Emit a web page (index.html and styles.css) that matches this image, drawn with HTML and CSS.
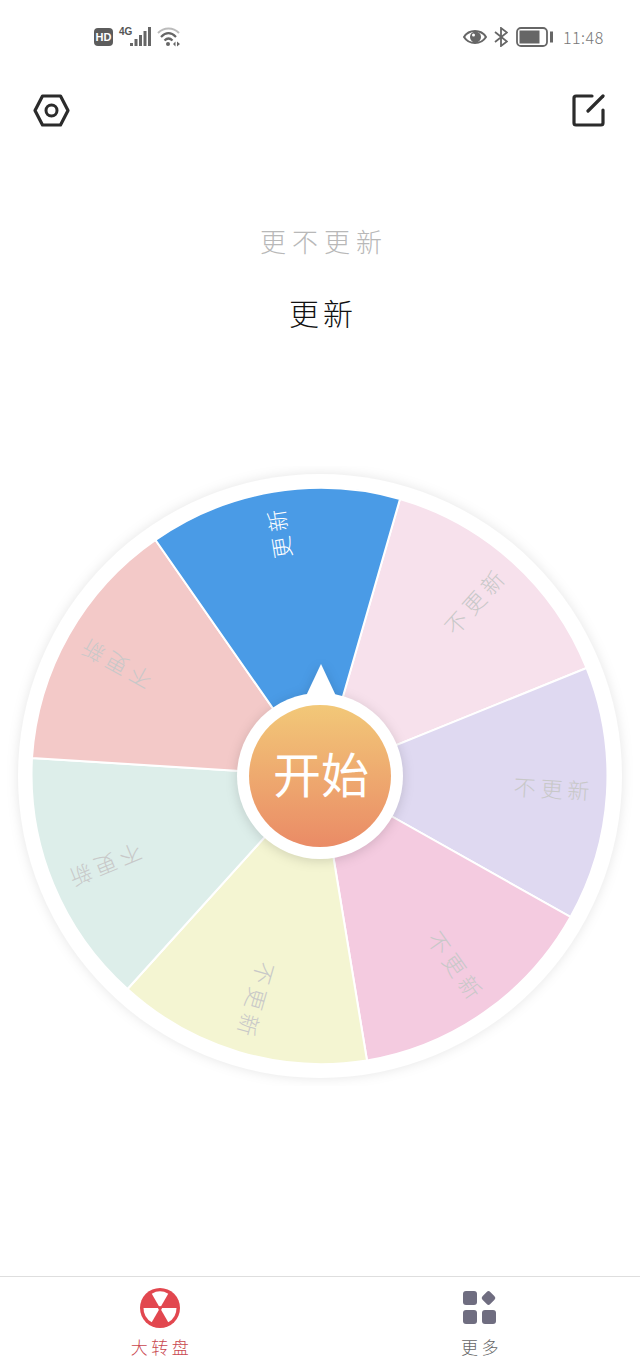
FILE: index.html

```html
<!DOCTYPE html>
<html lang="zh">
<head>
  <meta charset="UTF-8" />
  <meta name="viewport" content="width=device-width, initial-scale=1.0"/>
  <title>大转盘</title>
  <link rel="stylesheet" href="styles.css">
</head>
<body>
  <div class="page">
    <div class="status-bar">
      <div class="status-left">
        <span class="hd-badge">HD</span>
        <div class="signal">
          <span class="signal-type">4G</span>
          <svg class="signal-bars" width="21" height="20" viewBox="0 0 21 20">
            <rect x="0" y="16" width="3" height="3" fill="#666"/>
            <rect x="4.500" y="12" width="3" height="7" fill="#666"/>
            <rect x="9" y="8" width="3" height="11" fill="#666"/>
            <rect x="13.500" y="4" width="3" height="15" fill="#666"/>
            <rect x="18" y="0" width="3" height="19" fill="#666"/>
          </svg>
        </div>
        <svg class="wifi" width="24" height="20" viewBox="0 0 24 20">
          <path d="M1 6 C7 0 16 0 22 6" fill="none" stroke="#bbb" stroke-width="2"/>
          <path d="M4 10 C9 5 14 5 19 10" fill="none" stroke="#666" stroke-width="2.200"/>
          <path d="M7.500 13.500 C10 11 13 11 15.500 13.500" fill="none" stroke="#666" stroke-width="2.200"/>
          <circle cx="11" cy="17" r="2" fill="#666"/>
          <path d="M16 17 L18.500 14.500 V19.500 Z M20 14.500 L23 17 L20 19.500 Z" fill="#666"/>
        </svg>
      </div>
      <div class="status-right">
        <svg class="eye" width="24" height="18" viewBox="0 0 24 18">
          <path d="M1 9 C6 1 18 1 23 9 C18 17 6 17 1 9 Z" fill="none" stroke="#666" stroke-width="2"/>
          <circle cx="12.500" cy="9" r="5.500" fill="#666"/>
          <circle cx="10.500" cy="7" r="1.500" fill="#fff"/>
        </svg>
        <svg class="bluetooth" width="14" height="20" viewBox="0 0 14 20">
          <path d="M1 5 L13 14.500 L7 19 V1 L13 5.500 L1 15" fill="none" stroke="#666" stroke-width="1.800"/>
        </svg>
        <svg class="battery" width="37" height="20" viewBox="0 0 37 20">
          <rect x="1" y="1" width="30" height="18" rx="4" fill="none" stroke="#666" stroke-width="1.800"/>
          <rect x="3.500" y="3.500" width="20" height="13" fill="#666"/>
          <rect x="34" y="4.500" width="3" height="11" fill="#666"/>
        </svg>
        <span class="clock">11:48</span>
      </div>
    </div>

    <div class="toolbar">
      <svg width="37" height="33" viewBox="0 0 37 33">
        <path d="M9.500 2 H27.500 L35 16.500 L27.500 31 H9.500 L2 16.500 Z" fill="none" stroke="#2b2b2b" stroke-width="3.200" stroke-linejoin="round"/>
        <circle cx="18.500" cy="16.500" r="5.500" fill="none" stroke="#2b2b2b" stroke-width="3"/>
      </svg>
      <svg width="33" height="33" viewBox="0 0 33 33">
        <path d="M20 2 H4 Q2 2 2 4 V29 Q2 31 4 31 H29 Q31 31 31 29 V16" fill="none" stroke="#2b2b2b" stroke-width="3.200" stroke-linecap="round"/>
        <path d="M16 17 L31 2" fill="none" stroke="#2b2b2b" stroke-width="3.200" stroke-linecap="round"/>
      </svg>
    </div>

    <div class="titles">
      <div class="title-muted">更不更新</div>
      <div class="title-result">更新</div>
    </div>

    <svg class="wheel" width="640" height="620" viewBox="0 0 640 620">
      <defs>
        <linearGradient id="hubFill" x1="0" y1="0" x2="0" y2="1">
          <stop offset="0" stop-color="#f2c878"/>
          <stop offset="1" stop-color="#ea8b66"/>
        </linearGradient>
      </defs>
      <circle class="wheel-rim" cx="320" cy="310" r="302"/>
      <g class="slices">
        <path fill="#f7e1ec" d="M320 310 L400 33 A288 288 0 0 1 586.500 202 Z"/>
        <path fill="#dfd9f1" d="M320 310 L586.500 202 A288 288 0 0 1 570.500 451 Z"/>
        <path fill="#f4cbe0" d="M320 310 L570.500 451 A288 288 0 0 1 367 594.500 Z"/>
        <path fill="#f4f5d2" d="M320 310 L367 594.500 A288 288 0 0 1 127.500 523 Z"/>
        <path fill="#ddeeea" d="M320 310 L127.500 523 A288 288 0 0 1 32 292 Z"/>
        <path fill="#f3c9c8" d="M320 310 L32 292 A288 288 0 0 1 155.500 74 Z"/>
        <path fill="#4a9be6" d="M320 310 L155.500 74 A288 288 0 0 1 400 33 Z"/>
      </g>
      <g class="labels">
        <text transform="rotate(-48.200 320 310)" x="595" y="318">不更新</text>
        <text transform="rotate(3.300 320 310)" x="595" y="318">不更新</text>
        <text transform="rotate(54.700 320 310)" x="595" y="318">不更新</text>
        <text transform="rotate(106.100 320 310)" x="595" y="318">不更新</text>
        <text transform="rotate(157.600 320 310)" x="595" y="318">不更新</text>
        <text transform="rotate(209 320 310)" x="595" y="318">不更新</text>
        <text class="label-active" transform="rotate(-99.400 320 310)" x="595" y="318">更新</text>
      </g>
      <g class="hub">
        <path fill="#fff" d="M321 198 L337 232 L305 232 Z"/>
        <circle fill="#fff" cx="320" cy="310" r="83"/>
      </g>
      <circle fill="url(#hubFill)" cx="320" cy="310" r="71"/>
      <text class="hub-text" x="321" y="327">开始</text>
    </svg>

    <nav class="tab-bar">
      <div class="tab tab-active">
        <svg width="42" height="42" viewBox="-21 -21 42 42">
          <circle r="20" fill="#e2474f"/>
          <path fill="#fff" d="M0 0 L-8.250 -14.290 A16.500 16.500 0 0 1 8.250 -14.290 Z"/>
          <path fill="#fff" transform="rotate(120)" d="M0 0 L-8.250 -14.290 A16.500 16.500 0 0 1 8.250 -14.290 Z"/>
          <path fill="#fff" transform="rotate(240)" d="M0 0 L-8.250 -14.290 A16.500 16.500 0 0 1 8.250 -14.290 Z"/>
          <circle r="2" fill="#e2474f"/>
        </svg>
        <span class="tab-label">大转盘</span>
      </div>
      <div class="tab">
        <svg width="36" height="36" viewBox="0 0 36 36">
          <rect x="1" y="1" width="14" height="14" rx="3" fill="#6f6d80"/>
          <rect x="21" y="2.500" width="11" height="11" rx="2.500" fill="#6f6d80" transform="rotate(45 26.500 8)"/>
          <rect x="1" y="20" width="14" height="14" rx="3" fill="#6f6d80"/>
          <rect x="20" y="20" width="14" height="14" rx="3" fill="#6f6d80"/>
        </svg>
        <span class="tab-label">更多</span>
      </div>
    </nav>
  </div>
</body>
</html>
```

FILE: styles.css

```css
html, body {
  margin: 0;
  height: 100%;
  background: #fff;
  font-family: 'Noto Sans CJK SC', 'Noto Sans', sans-serif;
}

.page {
  width: 640px;
  height: 1369px;
  display: flex;
  flex-direction: column;
  overflow: hidden;
}

.status-bar {
  height: 74px;
  box-sizing: border-box;
  padding: 27px 36px 0 94px;
  display: flex;
  justify-content: space-between;
  align-items: flex-start;
}

.status-left, .status-right {
  display: flex;
  align-items: flex-start;
}

.hd-badge {
  width: 19px;
  height: 18px;
  margin-top: 1px;
  border-radius: 4px;
  background: #5c5c5c;
  color: #fff;
  font-family: 'Liberation Sans', sans-serif;
  font-size: 11px;
  font-weight: bold;
  line-height: 18px;
  text-align: center;
}

.signal {
  display: flex;
  margin-left: 6px;
}

.signal-type {
  width: 12px;
  margin-right: -1px;
  color: #555;
  font-family: 'Liberation Sans', sans-serif;
  font-size: 10px;
  font-weight: bold;
  line-height: 9px;
}

.wifi {
  margin-left: 6px;
}

.eye {
  margin-top: 1px;
}

.bluetooth {
  margin-left: 7px;
}

.battery {
  margin-left: 8px;
}

.clock {
  width: 41px;
  margin-left: 10px;
  color: #777;
  font-size: 16px;
  font-weight: 300;
  letter-spacing: 0.5px;
  line-height: 20px;
  white-space: nowrap;
}

.toolbar {
  display: flex;
  justify-content: space-between;
  padding: 20px 35px 0 33px;
}

.toolbar svg {
  display: block;
}

.titles {
  height: 339px;
  text-align: center;
}

.title-muted {
  margin-top: 95px;
  padding-left: 8px;
  color: #b8b8b8;
  font-size: 26px;
  font-weight: 300;
  letter-spacing: 6px;
  line-height: 38px;
}

.title-result {
  margin-top: 33px;
  padding-left: 6px;
  color: #111;
  font-size: 30px;
  font-weight: 300;
  letter-spacing: 4px;
  line-height: 38px;
}

.wheel {
  display: block;
  flex: none;
}

.wheel-rim {
  fill: #fff;
  filter: drop-shadow(0 0 6px rgba(0, 0, 0, 0.1));
}

.slices path {
  stroke: #fff;
  stroke-width: 2;
}

.labels text {
  fill: #c8c8c8;
  font-size: 22px;
  font-weight: 300;
  letter-spacing: 5px;
  text-anchor: end;
}

.labels .label-active {
  fill: #fff;
}

.hub {
  filter: drop-shadow(0 2px 6px rgba(0, 0, 0, 0.14));
}

.hub-text {
  fill: #fff;
  font-size: 48px;
  font-weight: 400;
  text-anchor: middle;
}

.tab-bar {
  margin-top: auto;
  height: 93px;
  box-sizing: border-box;
  border-top: 1px solid #dedede;
  display: flex;
}

.tab {
  flex: 1;
  display: flex;
  flex-direction: column;
  align-items: center;
  padding-top: 10px;
  color: #666;
}

.tab svg {
  display: block;
  height: 42px;
}

.tab-active {
  color: #c9474f;
}

.tab-label {
  margin-top: 5px;
  padding-left: 3px;
  font-size: 17px;
  font-weight: 300;
  letter-spacing: 3.5px;
  line-height: 26px;
}
```
